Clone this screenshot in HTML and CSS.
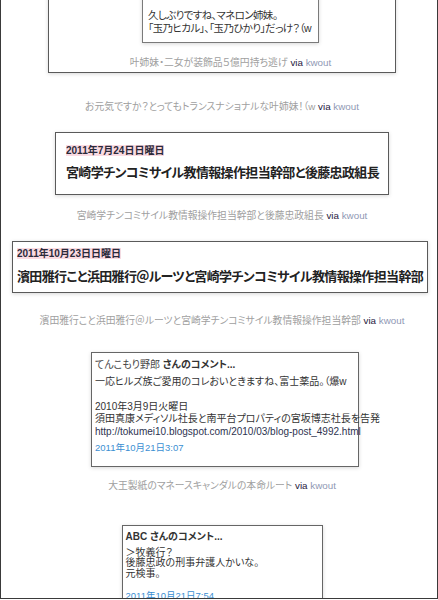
FILE: index.html
```html
<!DOCTYPE html>
<html lang="ja">
<head>
<meta charset="utf-8">
<title>kwout</title>
<link rel="stylesheet" href="styles.css">
</head>
<body>
<div class="frame">
  <div class="col">
    <div class="shot shot-outer">
      <div class="nest">
        <div class="shot shot-inner">
          <p>久しぶりですね、マネロン姉妹。</p>
          <p>「玉乃ヒカル」、「玉乃ひかり」だっけ？（w</p>
        </div>
        <p class="cap cap-nested">叶姉妹・二女が装飾品５億円持ち逃げ <span class="via">via</span> <span class="kw">kwout</span></p>
      </div>
    </div>
    <p class="cap cap-1">お元気ですか？とってもトランスナショナルな叶姉妹！（w <span class="via">via</span> <span class="kw">kwout</span></p>

    <div class="shot post post-a">
      <p class="date"><span>2011年7月24日日曜日</span></p>
      <p class="title">宮崎学チンコミサイル教情報操作担当幹部と後藤忠政組長</p>
    </div>
    <p class="cap cap-2">宮崎学チンコミサイル教情報操作担当幹部と後藤忠政組長 <span class="via">via</span> <span class="kw">kwout</span></p>

    <div class="shot post post-b">
      <p class="date"><span>2011年10月23日日曜日</span></p>
      <p class="title">濱田雅行こと浜田雅行＠ルーツと宮崎学チンコミサイル教情報操作担当幹部</p>
    </div>
    <p class="cap cap-3">濱田雅行こと浜田雅行＠ルーツと宮崎学チンコミサイル教情報操作担当幹部 <span class="via">via</span> <span class="kw">kwout</span></p>

    <div class="shot comment comment-a">
      <p class="c-head"><span class="c-name">てんこもり野郎</span> <b>さんのコメント...</b></p>
      <div class="c-body">
        <p>一応ヒルズ族ご愛用のコレおいときますね、富士薬品。（爆w</p>
        <p>&nbsp;</p>
        <p>2010年3月9日火曜日</p>
        <p>須田真康メディソル社長と南平台プロパティの宮坂博志社長を告発</p>
        <p class="c-url">http://tokumei10.blogspot.com/2010/03/blog-post_4992.html</p>
      </div>
      <p class="c-date">2011年10月21日3:07</p>
    </div>
    <p class="cap cap-4">大王製紙のマネースキャンダルの本命ルート <span class="via">via</span> <span class="kw">kwout</span></p>

    <div class="shot comment comment-b">
      <p class="c-head"><b>ABC さんのコメント...</b></p>
      <div class="c-body">
        <p>＞牧義行？</p>
        <p>後藤忠政の刑事弁護人かいな。</p>
        <p>元検事。</p>
      </div>
      <p class="c-date">2011年10月21日7:54</p>
    </div>
  </div>
</div>
</body>
</html>
```

FILE: styles.css
```css
html, body {
  margin: 0;
  padding: 0;
  background: #fff;
}

body {
  font-family: "Liberation Sans", "Noto Sans CJK JP", sans-serif;
  font-feature-settings: "palt";
  color: #333;
}

p {
  margin: 0;
}

.frame {
  width: 438px;
  height: 599px;
  box-sizing: border-box;
  border: 1px solid #3a3a3a;
  border-top: 0;
  overflow: hidden;
}

.col {
  display: flex;
  flex-direction: column;
  align-items: center;
  padding-left: 6px;
}

.shot {
  box-sizing: border-box;
  background: #fff;
  border: 1px solid #5a5a5a;
  box-shadow: 0 1px 4px rgba(0, 0, 0, 0.16);
}

/* nested kwout (block 1) */
.shot-outer {
  width: 348px;
  margin-top: -31px;
  padding: 20px 0 3px 17px;
}

.nest {
  display: flex;
  flex-direction: column;
  align-items: center;
}

.shot-inner {
  width: 177px;
  border-color: #7a7a7a;
  padding: 18px 4px 7px 5px;
  font-size: 10.5px;
  letter-spacing: -0.6px;
  line-height: 13px;
  color: #333;
  white-space: nowrap;
}

/* captions */
.cap {
  font-size: 9.8px;
  line-height: 12px;
  color: #a0a0a0;
  white-space: nowrap;
  text-align: center;
}

.via {
  color: #1e2040;
}

.kw {
  color: #8f98b4;
}

.cap-nested { margin-top: 14px; }
.cap-1 { margin-top: 28px; }
.cap-2 { margin-top: 15px; }
.cap-3 { margin-top: 22px; }
.cap-4 { margin-top: 13px; }

/* blog post headers */
.post {
  white-space: nowrap;
}

.date {
  font-size: 10px;
  line-height: 12px;
  font-weight: bold;
  color: #2a2a3a;
}

.date span {
  background: #fadbe2;
}

.title {
  font-size: 13px;
  letter-spacing: -0.65px;
  line-height: 16px;
  font-weight: bold;
  color: #222;
}

.post-a {
  width: 334px;
  margin-top: 19px;
  padding: 12px 8px 13px 10px;
}

.post-a .title { margin-top: 8px; }

.post-b {
  width: 416px;
  margin-top: 19px;
  margin-right: 4px;
  padding: 6px 4px 7px 4px;
}

.post-b .title { margin-top: 9px; }

/* comments */
.comment {
  white-space: nowrap;
  font-size: 10px;
  color: #333;
  border-color: #666;
}

.c-head {
  line-height: 13px;
}

.c-name {
  color: #444;
}

.c-body p {
  line-height: 12.5px;
}

.c-url {
  color: #2d3350;
}

.c-date {
  font-size: 9.5px;
  line-height: 13px;
  color: #3b8fd2;
}

.comment-a {
  width: 268px;
  margin-top: 25px;
  margin-left: 6px;
  padding: 4.5px 3px 12px 3px;
}

.comment-a .c-body { margin-top: 5px; }
.comment-a .c-date { margin-top: 3px; }

.comment-b {
  width: 201px;
  margin-top: 33px;
  padding: 3.5px 3px 12px 3px;
}

.comment-b .c-body { margin-top: 5px; }
.comment-b .c-body p { line-height: 10.5px; }
.comment-b .c-date { margin-top: 10px; }
```
